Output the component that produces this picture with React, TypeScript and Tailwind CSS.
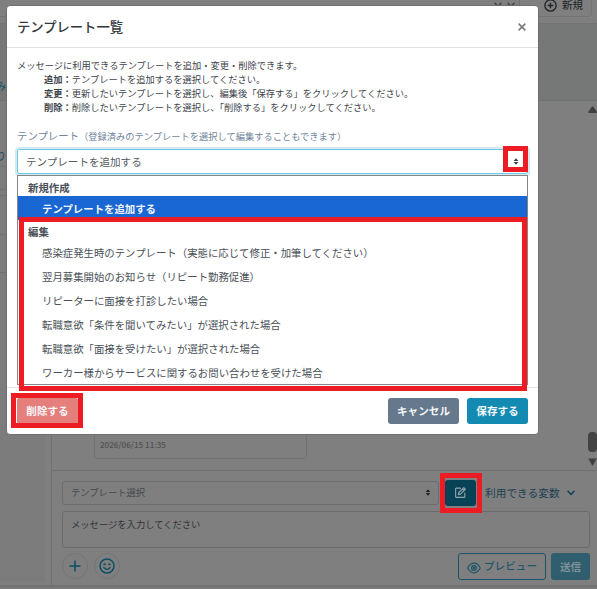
import type { ReactNode } from 'react';

const options = [
  '感染症発生時のテンプレート（実態に応じて修正・加筆してください）',
  '翌月募集開始のお知らせ（リピート勤務促進）',
  'リピーターに面接を打診したい場合',
  '転職意欲「条件を聞いてみたい」が選択された場合',
  '転職意欲「面接を受けたい」が選択された場合',
  'ワーカー様からサービスに関するお問い合わせを受けた場合',
];

const steps = [
  { name: '追加', text: 'テンプレートを追加するを選択してください。' },
  { name: '変更', text: '更新したいテンプレートを選択し、編集後「保存する」をクリックしてください。' },
  { name: '削除', text: '削除したいテンプレートを選択し、「削除する」をクリックしてください。' },
];

function SortArrows({ className }: { className: string }) {
  return (
    <svg viewBox="0 0 6 8" className={`h-[7px] w-[6px] ${className}`} fill="currentColor">
      <path d="M3 0.3 5.7 3.3H0.3zM3 7.7 0.3 4.7h5.4z" />
    </svg>
  );
}

function Chevron({ className }: { className: string }) {
  return (
    <svg viewBox="0 0 8 6" className={`h-[6px] w-[8px] ${className}`} fill="none" stroke="currentColor" strokeWidth="1.5" strokeLinecap="round">
      <path d="M1 1.3 4 4.5 7 1.3" />
    </svg>
  );
}

function RoundButton({ children }: { children: ReactNode }) {
  return (
    <button className="flex size-[26px] items-center justify-center rounded-full border border-[#757575] text-[#0b4f66]">
      {children}
    </button>
  );
}

function Background() {
  return (
    <div className="flex h-full flex-col bg-[#7f7f7f]">
      <header className="flex h-6 shrink-0 border-b border-[#727373]">
        <div className="flex h-[17px] w-[520px] items-start justify-end gap-[5px] border-r border-b border-[#717171] pt-[2px] pr-1">
          <Chevron className="text-[#414549]" />
          <Chevron className="text-[#414549]" />
        </div>
        <button className="ml-[16px] flex h-[17px] w-[56px] items-start gap-[5px] rounded-b-sm border-r border-b border-[#747474] pl-[8px] text-[#202427]">
          <svg viewBox="0 0 12 12" className="mt-[-1px] size-[13px] shrink-0" fill="none" stroke="currentColor" strokeWidth="1.2">
            <circle cx="6" cy="6" r="5.2" />
            <path d="M6 3.4v5.2M3.4 6h5.2" />
          </svg>
          <span className="text-[10.6px] leading-[10px] whitespace-nowrap">新規</span>
        </button>
      </header>
      <div className="h-[77px] shrink-0 border-b border-[#707171] bg-[#757877] pt-[53px] text-[10px] leading-[18px] text-[#0b4f66]">
        <div className="flex w-[6px] justify-end whitespace-nowrap">み</div>
      </div>
      <div className="flex min-h-0 flex-1 border-b-2 border-[#717171]">
        <aside className="flex w-[52px] shrink-0 flex-col border-r border-[#707070]">
          <div className="w-[45px] flex-1 bg-[#7c7c7c] text-[10px] text-[#1b3f5c]">
            <div className="h-[66px] border-b border-[#727272] pt-[46px] leading-[18px]">
              <div className="flex w-[6px] justify-end whitespace-nowrap">り</div>
            </div>
            <div className="h-[23px] border-b border-[#727272]" />
            <div className="h-[6px] border-b border-[#727272]" />
            <div className="h-[39px] border-b border-[#727272]" />
            <div className="h-[38px] border-b border-[#727272]" />
          </div>
          <div className="h-[3px]" />
        </aside>
        <main className="flex min-w-0 flex-1 flex-col">
          <div className="flex min-h-0 flex-1 border-b border-[#707070] pl-[42px]">
            <div className="mb-[11px] flex w-[213px] items-end rounded-[3px] border border-[#727272] px-[5px] pb-[5px] text-[8.1px] leading-[16px] font-medium text-[#505153]">
              2026/06/15 11:35
            </div>
            <div className="ml-auto flex w-[9px] flex-col pt-[5px] text-[#414141]">
              <svg viewBox="0 0 9 7" className="h-[7px] w-[9px] shrink-0" fill="currentColor">
                <path d="M4.5 0.2Q5 0 5.5 1L9 6Q9 7 8 7H1Q0 7 0.3 6L3.7 0.7z" />
              </svg>
              <div className="mt-auto h-[20px] w-[9px] rounded-[4px] bg-[#434343]" />
              <svg viewBox="0 0 9 8" className="mt-[6px] mb-[4px] h-[8px] w-[9px] shrink-0" fill="currentColor">
                <path d="M0.2 0.5H8.8L5 7.2Q4.5 8 4 7.2z" />
              </svg>
            </div>
          </div>
          <div className="h-[114px] shrink-0 pt-[10px] pr-[7px] pl-[10px]">
            <div className="flex h-[24px] items-center">
              <div className="flex h-[24px] w-[377px] items-center justify-between rounded-[3px] border border-[#6c6c6c] pr-[7px] pl-[8px] text-[9.3px] text-[#45484b]">
                <span>テンプレート選択</span>
                <SortArrows className="mb-[2px] text-[#202427]" />
              </div>
              <button className="ml-[6px] flex h-[26px] w-[31px] items-center justify-center rounded-[3px] bg-[#084257] text-[#93a5ac]">
                <svg viewBox="0 0 24 24" className="mb-[2px] size-[13px]" fill="none" stroke="currentColor" strokeWidth="2.1" strokeLinejoin="round" strokeLinecap="round">
                  <path d="M12 4H4a1 1 0 0 0-1 1v15a1 1 0 0 0 1 1h15a1 1 0 0 0 1-1v-7" />
                  <path d="m9 12 9-9 3 3-9 9-4 1zM15.5 5.5l3 3" />
                </svg>
              </button>
              <div className="ml-[9px] flex items-center gap-[7px] text-[10.7px] whitespace-nowrap text-[#203f51]">
                利用できる変数
                <Chevron className="text-[#0c4256]" />
              </div>
            </div>
            <div className="mt-[6px] h-[37px] rounded-[3px] border border-[#6b6b6b] px-[8px] pt-[5px] text-[9.3px] leading-[14px] text-[#2f3337]">
              メッセージを入力してください
            </div>
            <div className="mt-[5px] flex items-start">
              <RoundButton>
                <svg viewBox="0 0 12 12" className="size-[12px]" fill="none" stroke="currentColor" strokeWidth="1.5">
                  <path d="M6 0.5v11M0.5 6h11" />
                </svg>
              </RoundButton>
              <div className="w-[6px]" />
              <RoundButton>
                <svg viewBox="0 0 16 16" className="size-[16px] shrink-0" fill="none" stroke="currentColor" strokeWidth="1.5" strokeLinecap="round">
                  <circle cx="8" cy="8" r="7" />
                  <path d="M4.8 9.5Q8 13.2 11.2 9.5M4.9 6.6Q5.6 5.3 6.4 6.6M9.6 6.6Q10.4 5.3 11.1 6.6" strokeWidth="1.2" />
                </svg>
              </RoundButton>
              <button className="ml-auto flex h-[27px] w-[88px] items-center justify-center gap-[3px] rounded-[3px] border border-[#1b5367] text-[10.6px] font-medium whitespace-nowrap text-[#1f566a]">
                <svg viewBox="0 0 14 12" className="mt-[3px] h-[12px] w-[14px] shrink-0" fill="none" stroke="currentColor" strokeWidth="1.2">
                  <path d="M0.7 6Q3.2 1.2 7 1.2T13.3 6Q10.8 10.8 7 10.8T0.7 6z" />
                  <circle cx="7" cy="6" r="2.4" />
                  <circle cx="7" cy="6" r="0.6" fill="currentColor" />
                </svg>
                <span className="-mt-[2px]">プレビュー</span>
              </button>
              <button className="ml-[5px] h-[27px] w-[39px] rounded-[3px] bg-[#2f5f6e] text-[10.6px] leading-[27px] font-bold text-[#7e9098]">
                送信
              </button>
            </div>
          </div>
        </main>
      </div>
      <div className="h-[2px] bg-[#7a7a7a]" />
    </div>
  );
}

function Dropdown() {
  return (
    <div className="absolute top-[26px] right-0 left-0 h-[210px] border border-[#858585] bg-white pt-[2px] text-[10.4px] text-[#495057]">
      <div className="h-[18px] pl-[10px] leading-[19px] font-bold">新規作成</div>
      <div className="h-[24px] bg-[#1967d2] pl-[24px] leading-[25px] font-bold text-[#f3f6ff]">テンプレートを追加する</div>
      <div className="h-[21px] pl-[10px] leading-[23px] font-bold">編集</div>
      {options.map((o) => (
        <div key={o} className="h-6 pl-[24px] leading-[23px] whitespace-nowrap">
          {o}
        </div>
      ))}
    </div>
  );
}

function TemplateModal() {
  return (
    <div className="absolute top-[5px] left-[6px] flex h-[430px] w-[533px] flex-col rounded-[4px] border border-[#6f6f6f] bg-white text-[#3e444a]">
      <div className="flex h-[42px] shrink-0 items-center justify-between border-b border-[#dfe2e3] px-[10px] text-[#33383d]">
        <h1 className="text-[13.3px] font-medium">テンプレート一覧</h1>
        <button className="mr-[2px] text-[#777]">
          <svg viewBox="0 0 8 8" className="size-[8px]" fill="none" stroke="currentColor" strokeWidth="1.5">
            <path d="m0.6 0.6 6.8 6.8M7.4 0.6 0.6 7.4" />
          </svg>
        </button>
      </div>
      <div className="flex-1 px-[10px] pt-[10px] text-[9.25px] leading-[14px]">
        <p>メッセージに利用できるテンプレートを追加・変更・削除できます。</p>
        <ul className="pl-[27px]">
          {steps.map((s) => (
            <li key={s.name} className="whitespace-nowrap">
              <b>{s.name}：</b>
              {s.text}
            </li>
          ))}
        </ul>
        <div className="mt-[12px] h-[20px] leading-[20px] whitespace-nowrap text-[#70849a]">
          <span className="text-[10.4px]">テンプレート</span>
          <span className="text-[9.25px]">（登録済みのテンプレートを選択して編集することもできます）</span>
        </div>
        <div className="relative mt-[3px]">
          <div className="flex h-[25px] items-center justify-between rounded-[2px] border border-[#6ccbe8] pr-[8px] pl-[8px] text-[10.55px] text-[#555b61] shadow-[0_0_0_2px_#d3eaf1]">
            テンプレートを追加する
            <SortArrows className="text-[#343a40]" />
          </div>
          <Dropdown />
        </div>
      </div>
      <div className="flex h-[47px] shrink-0 items-start border-t border-[#e3e5e7] px-[10px] pt-[10px] text-[10.6px] leading-[26px] font-bold text-[#f5f8fa]">
        <button className="h-[26px] w-[61px] rounded-[2px] bg-[#e57f7b]">削除する</button>
        <button className="ml-auto h-[26px] w-[71px] rounded-[3px] bg-[#66798c]">キャンセル</button>
        <button className="ml-[8px] h-[26px] w-[61px] rounded-[3px] bg-[#128ab2]">保存する</button>
      </div>
    </div>
  );
}

export default function App() {
  return (
    <div className="relative h-[589px] w-[597px] overflow-hidden font-['Noto_Sans_CJK_JP',sans-serif]">
      <Background />
      <TemplateModal />
      {/* highlight frames */}
      <div className="absolute top-[146px] left-[503px] h-[26px] w-[25px] border-5 border-[#ed1c24]" />
      <div className="absolute top-[217px] left-[19px] h-[174px] w-[508px] border-5 border-[#ed1c24]" />
      <div className="absolute top-[393px] left-[11px] h-[35px] w-[72px] border-5 border-[#ed1c24]" />
      <div className="absolute top-[473px] left-[440px] h-[40px] w-[42px] border-5 border-[#ed1c24]" />
    </div>
  );
}
